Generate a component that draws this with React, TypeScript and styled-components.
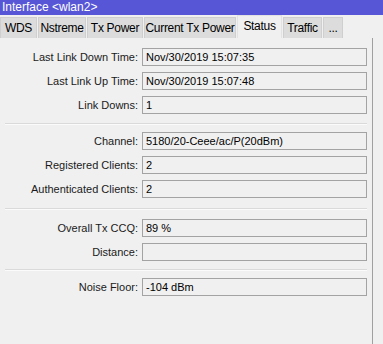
import styled, { createGlobalStyle } from 'styled-components';

const GlobalStyle = createGlobalStyle`
  html, body {
    margin: 0;
    padding: 0;
    background: #f0f0f0;
  }
  body {
    font-family: "Liberation Sans", Arial, sans-serif;
    font-size: 11px;
    color: #000;
  }
`;

const Window = styled.div`
  width: 383px;
  height: 344px;
  display: flex;
  flex-direction: column;
  background: #f0f0f0;
  overflow: hidden;
`;

const TitleBar = styled.div`
  height: 15px;
  background: #5656d6;
  color: #fff;
  font-size: 12px;
  line-height: 15px;
  padding-left: 2px;
  white-space: nowrap;
`;

const TabStrip = styled.div`
  height: 23px;
  display: flex;
  align-items: flex-end;
`;

const Tab = styled.div<{ $w: number; $active?: boolean }>`
  width: ${({ $w }) => $w}px;
  height: ${({ $active }) => ($active ? 23 : 21)}px;
  box-sizing: border-box;
  display: flex;
  align-items: center;
  justify-content: center;
  font-size: 12px;
  letter-spacing: -0.3px;
  white-space: nowrap;
  background: ${({ $active }) => ($active ? '#f0f0f0' : '#dcdcdc')};
  border: 1px solid ${({ $active }) => ($active ? '#e2e2e2' : '#cfcfcf')};
  border-bottom: none;
  margin-right: 1px;
  padding-bottom: ${({ $active }) => ($active ? 3 : 0)}px;
`;

const Body = styled.div`
  flex: 1;
  display: flex;
`;

const Panel = styled.div`
  width: 373px;
  box-sizing: border-box;
  border-right: 1px solid #a0a0a0;
  padding: 10px 0 0 5px;
  display: flex;
  flex-direction: column;
`;

const Group = styled.div`
  display: flex;
  flex-direction: column;
  gap: 6px;
`;

const Row = styled.div`
  display: flex;
  align-items: center;
  height: 18px;
`;

const Label = styled.div`
  width: 137px;
  text-align: right;
  padding-right: 4px;
  box-sizing: border-box;
  white-space: nowrap;
  color: #1a1a1a;
`;

const Field = styled.div`
  width: 225px;
  height: 18px;
  box-sizing: border-box;
  border: 1px solid #a3a3a3;
  background: #f0f0f0;
  line-height: 16px;
  padding-left: 3px;
  white-space: nowrap;
  overflow: hidden;
`;

const Divider = styled.div<{ $before: number; $after: number }>`
  height: 1px;
  background: #dadada;
  border-bottom: 1px solid #fbfbfb;
  width: 362px;
  margin: ${({ $before, $after }) => `${$before}px 0 ${$after}px`};
`;

const tabs = [
  { name: 'WDS', w: 37 },
  { name: 'Nstreme', w: 48 },
  { name: 'Tx Power', w: 56 },
  { name: 'Current Tx Power', w: 92 },
  { name: 'Status', w: 45, active: true },
  { name: 'Traffic', w: 39 },
  { name: '...', w: 20 },
];

type Item = { label: string; value: string };

const groups: { items: Item[]; before: number; after: number }[] = [
  {
    items: [
      { label: 'Last Link Down Time:', value: 'Nov/30/2019 15:07:35' },
      { label: 'Last Link Up Time:', value: 'Nov/30/2019 15:07:48' },
      { label: 'Link Downs:', value: '1' },
    ],
    before: 0,
    after: 0,
  },
  {
    items: [
      { label: 'Channel:', value: '5180/20-Ceee/ac/P(20dBm)' },
      { label: 'Registered Clients:', value: '2' },
      { label: 'Authenticated Clients:', value: '2' },
    ],
    before: 9,
    after: 7,
  },
  {
    items: [
      { label: 'Overall Tx CCQ:', value: '89 %' },
      { label: 'Distance:', value: '' },
    ],
    before: 10,
    after: 9,
  },
  {
    items: [{ label: 'Noise Floor:', value: '-104 dBm' }],
    before: 8,
    after: 7,
  },
];

export default function App() {
  return (
    <Window>
      <GlobalStyle />
      <TitleBar>Interface &lt;wlan2&gt;</TitleBar>
      <TabStrip>
        {tabs.map((t) => (
          <Tab key={t.name} $w={t.w} $active={t.active}>
            {t.name}
          </Tab>
        ))}
      </TabStrip>
      <Body>
        <Panel>
          {groups.map((g, i) => (
            <div key={i}>
              {i > 0 && <Divider $before={g.before} $after={g.after} />}
              <Group>
                {g.items.map((it) => (
                  <Row key={it.label}>
                    <Label>{it.label}</Label>
                    <Field>{it.value}</Field>
                  </Row>
                ))}
              </Group>
            </div>
          ))}
        </Panel>
      </Body>
    </Window>
  );
}
